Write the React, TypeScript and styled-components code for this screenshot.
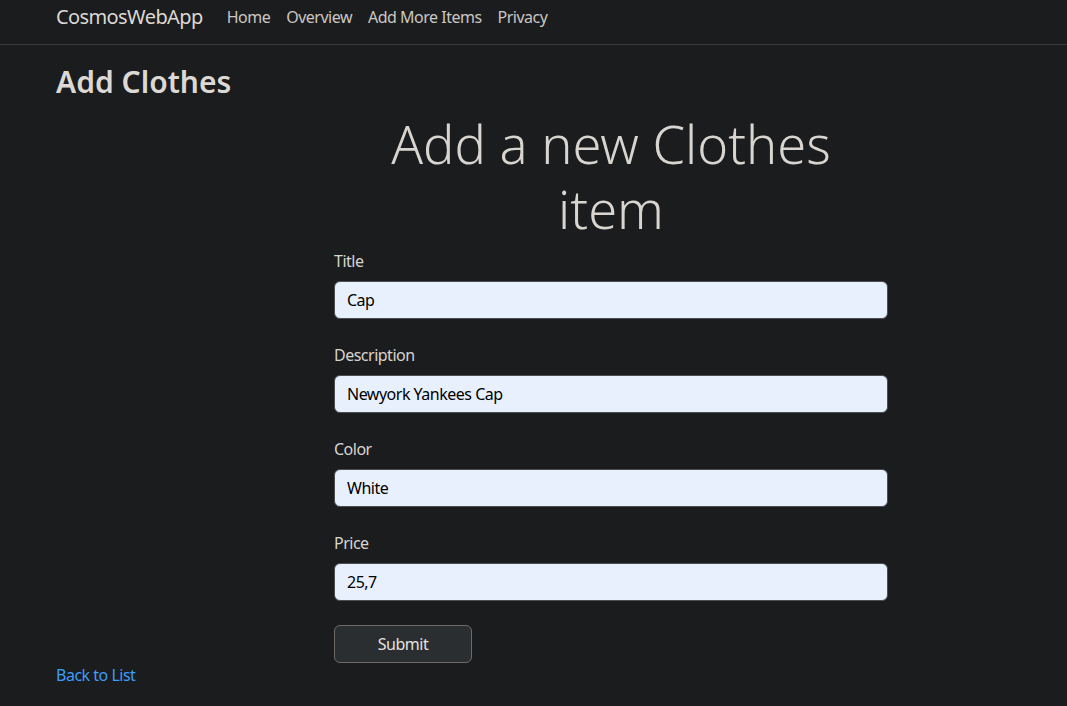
import React from "react";
import styled, { createGlobalStyle } from "styled-components";

const GlobalStyle = createGlobalStyle`
  html, body {
    margin: 0;
    padding: 0;
    background: #1b1c1e;
    color: #d8d4cf;
    font-family: "Segoe UI", "Noto Sans", "Open Sans", sans-serif;
    font-size: 16px;
    line-height: 1.5;
    letter-spacing: -0.5px;
  }
  * { box-sizing: border-box; }
`;

const Page = styled.div`
  min-height: 706px;
  background: #1b1c1e;
`;

const NavBar = styled.nav`
  display: flex;
  align-items: flex-start;
  height: 45px;
  padding: 2px 56px 0;
  border-bottom: 1px solid #3a3c3e;
`;

const Brand = styled.a`
  font-size: 20px;
  line-height: 30px;
  color: #dcd8d3;
  margin-right: 16px;
  text-decoration: none;
  letter-spacing: -0.6px;
`;

const NavLinks = styled.ul`
  display: flex;
  list-style: none;
  margin: 0;
  padding: 3px 0 0;
`;

const NavLink = styled.a`
  display: block;
  padding: 0 8px;
  font-size: 16px;
  line-height: 24px;
  color: #cbc7c2;
  text-decoration: none;
`;

const Main = styled.main`
  padding: 0 56px;
`;

const PageTitle = styled.h2`
  margin: 19px 0 0;
  font-size: 30px;
  font-weight: 600;
  line-height: 1.2;
  color: #dcd8d3;
  letter-spacing: 0;
`;

const FormColumn = styled.div`
  width: 554px;
  margin-left: 278px;
`;

const DisplayTitle = styled.h1`
  margin: 11px 0 8px;
  font-size: 52.4px;
  font-weight: 300;
  line-height: 65px;
  text-align: center;
  color: #d8d4cf;
  letter-spacing: 0;
`;

const Group = styled.div`
  margin-bottom: 24px;
`;

const Label = styled.label`
  display: block;
  margin-bottom: 8px;
  font-size: 16px;
  color: #d8d4cf;
`;

const Input = styled.input`
  display: block;
  width: 100%;
  height: 38px;
  padding: 6px 12px;
  font-family: inherit;
  font-size: 16px;
  letter-spacing: -0.5px;
  color: #000;
  background: #e8f0fe;
  border: 1px solid #4a4e52;
  border-radius: 6px;
  outline: none;
`;

const SubmitButton = styled.button`
  width: 138px;
  height: 38px;
  font-family: inherit;
  font-size: 16px;
  letter-spacing: -0.5px;
  color: #e6e3df;
  background: #2b2e31;
  border: 1px solid #6e6a64;
  border-radius: 6px;
`;

const BackLink = styled.a`
  display: inline-block;
  font-size: 16px;
  color: #3e9df7;
  text-decoration: none;
`;

const fields = [
  { label: "Title", value: "Cap" },
  { label: "Description", value: "Newyork Yankees Cap" },
  { label: "Color", value: "White" },
  { label: "Price", value: "25,7" },
];

export default function App() {
  return (
    <Page>
      <GlobalStyle />
      <NavBar>
        <Brand href="#">CosmosWebApp</Brand>
        <NavLinks>
          {["Home", "Overview", "Add More Items", "Privacy"].map((l) => (
            <li key={l}>
              <NavLink href="#">{l}</NavLink>
            </li>
          ))}
        </NavLinks>
      </NavBar>
      <Main>
        <PageTitle>Add Clothes</PageTitle>
        <FormColumn>
          <DisplayTitle>Add a new Clothes item</DisplayTitle>
          <form onSubmit={(e) => e.preventDefault()}>
            {fields.map((f) => (
              <Group key={f.label}>
                <Label>{f.label}</Label>
                <Input defaultValue={f.value} />
              </Group>
            ))}
            <SubmitButton type="submit">Submit</SubmitButton>
          </form>
        </FormColumn>
        <BackLink href="#">Back to List</BackLink>
      </Main>
    </Page>
  );
}
